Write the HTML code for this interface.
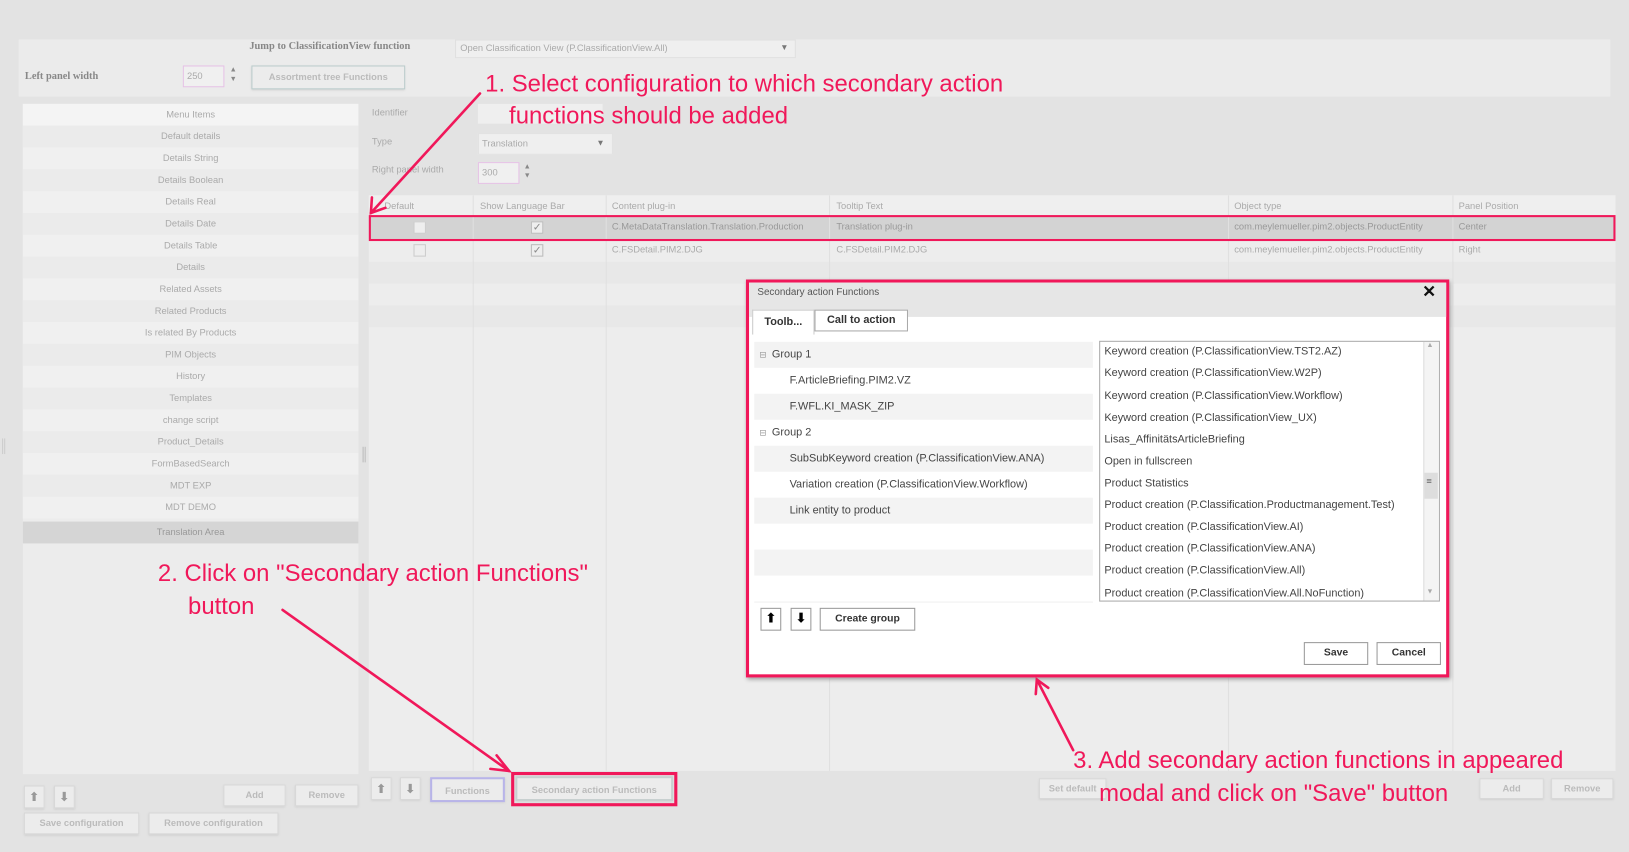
<!DOCTYPE html>
<html><head><meta charset="utf-8"><style>
html,body{margin:0;padding:0;width:1629px;height:852px;overflow:hidden;background:#e3e3e3}
#w{position:absolute;left:0;top:0;width:1568px;height:820px;transform:scale(1.03890,1.03902);transform-origin:0 0;font-family:"Liberation Sans",sans-serif;}
.a{position:absolute;box-sizing:border-box}
.t{position:absolute;font-size:9px;color:#aaa;white-space:nowrap}
.btn{position:absolute;box-sizing:border-box;border:1px solid #d8d8d8;background:#ececec;color:#bbb;font-size:9px;text-align:center;font-weight:bold;box-shadow:0 1px 2px #ccc}
.row{position:absolute;left:0;right:0;height:21px;font-size:9px;color:#aaa;text-align:center;line-height:21px}
.ann{position:absolute;color:#f0185a;font-family:"Liberation Sans Narrow","Liberation Sans",sans-serif;font-size:23px;white-space:nowrap}
.m{position:absolute;font-size:10.5px;color:#444;white-space:nowrap}
.mb{position:absolute;box-sizing:border-box;border:1px solid #999;background:#fff;font-size:10px;font-weight:bold;color:#333;text-align:center}
.ar{font-family:"DejaVu Sans",sans-serif}
</style></head><body><div id="w">
<div class="a" style="left:18px;top:38px;width:1532px;height:55px;background:#ebebeb"></div>
<div class="t" style="left:240px;top:39px;font-family:'Liberation Serif',serif;font-weight:bold;font-size:10px;color:#888">Jump to ClassificationView function</div>
<div class="a" style="left:438px;top:38px;width:328px;height:18px;background:#efefef;border:1px solid #e0e0e0"></div>
<div class="t" style="left:443px;top:41px">Open Classification View (P.ClassificationView.All)</div>
<div class="t" style="left:751px;top:41px;color:#777;font-size:8px">▼</div>
<div class="t" style="left:24px;top:68px;font-family:'Liberation Serif',serif;font-weight:bold;font-size:10px;color:#888">Left panel width</div>
<div class="a" style="left:176px;top:63px;width:40px;height:21px;border:1px solid #e6c2e6;background:#f0f0f0"></div>
<div class="t" style="left:180px;top:68px">250</div>
<div class="t" style="left:221px;top:63px;font-size:7px;color:#888;line-height:9px">▲<br>▼</div>
<div class="btn" style="left:242px;top:63px;width:148px;height:23px;line-height:21px;border-color:#bcc">Assortment tree Functions</div>
<div class="a" style="left:22px;top:100px;width:323px;height:645px;background:#ececec">
<div class="row" style="top:0;background:#f4f4f4">Menu Items</div>
<div class="row" style="top:21px;background:#ebebeb">Default details</div>
<div class="row" style="top:42px;background:#f0f0f0">Details String</div>
<div class="row" style="top:63px;background:#ebebeb">Details Boolean</div>
<div class="row" style="top:84px;background:#f0f0f0">Details Real</div>
<div class="row" style="top:105px;background:#ebebeb">Details Date</div>
<div class="row" style="top:126px;background:#f0f0f0">Details Table</div>
<div class="row" style="top:147px;background:#ebebeb">Details</div>
<div class="row" style="top:168px;background:#f0f0f0">Related Assets</div>
<div class="row" style="top:189px;background:#ebebeb">Related Products</div>
<div class="row" style="top:210px;background:#f0f0f0">Is related By Products</div>
<div class="row" style="top:231px;background:#ebebeb">PIM Objects</div>
<div class="row" style="top:252px;background:#f0f0f0">History</div>
<div class="row" style="top:273px;background:#ebebeb">Templates</div>
<div class="row" style="top:294px;background:#f0f0f0">change script</div>
<div class="row" style="top:315px;background:#ebebeb">Product_Details</div>
<div class="row" style="top:336px;background:#f0f0f0">FormBasedSearch</div>
<div class="row" style="top:357px;background:#ebebeb">MDT EXP</div>
<div class="row" style="top:378px;background:#f0f0f0">MDT DEMO</div>
<div class="row" style="top:402px;background:#d5d5d5;color:#999">Translation Area</div>
</div>
<div class="a" style="left:349px;top:430px;width:3px;height:15px;border-left:1px solid #bbb;border-right:1px solid #bbb"></div>
<div class="a" style="left:2px;top:422px;width:3px;height:15px;border-left:1px solid #ccc;border-right:1px solid #ccc"></div>
<div class="t" style="left:358px;top:103px">Identifier</div>
<div class="a" style="left:460px;top:100px;width:120px;height:19px;background:#efefef"></div>
<div class="t" style="left:358px;top:131px">Type</div>
<div class="a" style="left:460px;top:128px;width:130px;height:21px;background:#efefef;border:1px solid #e2e2e2"></div>
<div class="t" style="left:464px;top:133px">Translation</div>
<div class="t" style="left:574px;top:133px;color:#777;font-size:8px">▼</div>
<div class="t" style="left:358px;top:158px">Right panel width</div>
<div class="a" style="left:460px;top:156px;width:40px;height:21px;border:1px solid #e6c2e6;background:#f0f0f0"></div>
<div class="t" style="left:464px;top:161px">300</div>
<div class="t" style="left:504px;top:156px;font-size:7px;color:#888;line-height:9px">▲<br>▼</div>
<div class="a" style="left:355px;top:188px;width:1200px;height:554px;background:#ededed"></div>
<div class="a" style="left:355px;top:188px;width:1200px;height:19px;background:#efefef"></div>
<div class="a" style="left:355px;top:208px;width:1200px;height:22px;background:#d3d3d3"></div>
<div class="a" style="left:355px;top:252px;width:1200px;height:21px;background:#e8e8e8"></div>
<div class="a" style="left:355px;top:294px;width:1200px;height:21px;background:#e8e8e8"></div>
<div class="a" style="left:455px;top:188px;width:1px;height:554px;background:#e0e0e0"></div>
<div class="a" style="left:583px;top:188px;width:1px;height:554px;background:#e0e0e0"></div>
<div class="a" style="left:798px;top:188px;width:1px;height:554px;background:#e0e0e0"></div>
<div class="a" style="left:1182px;top:188px;width:1px;height:554px;background:#e0e0e0"></div>
<div class="a" style="left:1398px;top:188px;width:1px;height:554px;background:#e0e0e0"></div>
<div class="t" style="left:370px;top:193px">Default</div>
<div class="t" style="left:462px;top:193px">Show Language Bar</div>
<div class="t" style="left:589px;top:193px">Content plug-in</div>
<div class="t" style="left:805px;top:193px">Tooltip Text</div>
<div class="t" style="left:1188px;top:193px">Object type</div>
<div class="t" style="left:1404px;top:193px">Panel Position</div>
<div class="a" style="left:398px;top:213px;width:12px;height:12px;border:1px solid #ccc;background:#eee"></div>
<div class="a" style="left:511px;top:213px;width:12px;height:12px;border:1px solid #bbb;background:#eee;font-size:10px;color:#888;line-height:11px;text-align:center">✓</div>
<div class="t" style="left:589px;top:213px;color:#999">C.MetaDataTranslation.Translation.Production</div>
<div class="t" style="left:805px;top:213px;color:#999">Translation plug-in</div>
<div class="t" style="left:1188px;top:213px;color:#999">com.meylemueller.pim2.objects.ProductEntity</div>
<div class="t" style="left:1404px;top:213px;color:#999">Center</div>
<div class="a" style="left:398px;top:235px;width:12px;height:12px;border:1px solid #ccc;background:#eee"></div>
<div class="a" style="left:511px;top:235px;width:12px;height:12px;border:1px solid #bbb;background:#eee;font-size:10px;color:#888;line-height:11px;text-align:center">✓</div>
<div class="t" style="left:589px;top:235px">C.FSDetail.PIM2.DJG</div>
<div class="t" style="left:805px;top:235px">C.FSDetail.PIM2.DJG</div>
<div class="t" style="left:1188px;top:235px">com.meylemueller.pim2.objects.ProductEntity</div>
<div class="t" style="left:1404px;top:235px">Right</div>
<div class="a" style="left:355px;top:207px;width:1200px;height:25px;border:2px solid #f0185a"></div>
<div class="btn ar" style="left:357px;top:748px;width:20px;height:22px;color:#999;font-size:12px;line-height:20px">⬆</div>
<div class="btn ar" style="left:385px;top:748px;width:20px;height:22px;color:#999;font-size:12px;line-height:20px">⬇</div>
<div class="btn" style="left:414px;top:748px;width:72px;height:24px;line-height:22px;border:2px solid #b8b4e8">Functions</div>
<div class="btn" style="left:496px;top:747px;width:152px;height:24px;line-height:22px;border:2px solid #c8d0d0">Secondary action Functions</div>
<div class="a" style="left:492px;top:743px;width:160px;height:33px;border:3px solid #f0185a"></div>
<div class="btn" style="left:1000px;top:749px;width:65px;height:20px;line-height:18px">Set default</div>
<div class="btn" style="left:1424px;top:749px;width:62px;height:20px;line-height:18px">Add</div>
<div class="btn" style="left:1493px;top:749px;width:60px;height:20px;line-height:18px">Remove</div>
<div class="btn ar" style="left:23px;top:756px;width:20px;height:22px;color:#999;font-size:12px;line-height:20px">⬆</div>
<div class="btn ar" style="left:52px;top:756px;width:20px;height:22px;color:#999;font-size:12px;line-height:20px">⬇</div>
<div class="btn" style="left:215px;top:755px;width:60px;height:21px;line-height:19px">Add</div>
<div class="btn" style="left:284px;top:755px;width:61px;height:21px;line-height:19px">Remove</div>
<div class="btn" style="left:23px;top:782px;width:111px;height:21px;line-height:19px">Save configuration</div>
<div class="btn" style="left:143px;top:782px;width:125px;height:21px;line-height:19px">Remove configuration</div>
<div class="a" style="left:718px;top:269px;width:677px;height:383px;background:#fff;border:3px solid #f0185a;box-shadow:1px 2px 4px #999">
<div class="a" style="left:0;top:0;width:671px;height:33px;background:#e6e6e6"></div>
<div class="m" style="left:8px;top:4px;font-size:9.5px;color:#555">Secondary action Functions</div>
<div class="m" style="left:648px;top:-1px;font-size:16px;font-weight:bold;color:#111">✕</div>
<div class="a" style="left:3px;top:26px;width:60px;height:24px;background:#fff;border:1px solid #ccc;border-bottom:none;font-size:10.5px;font-weight:bold;color:#333;text-align:center;line-height:22px">Toolb...</div>
<div class="a" style="left:63px;top:26px;width:90px;height:21px;background:#fff;border:1px solid #aaa;font-size:10.5px;font-weight:bold;color:#333;text-align:center;line-height:19px">Call to action</div>
<div class="a" style="left:5px;top:57px;width:326px;height:25px;background:#f3f3f3"></div>
<div class="a" style="left:5px;top:107px;width:326px;height:25px;background:#f3f3f3"></div>
<div class="a" style="left:5px;top:157px;width:326px;height:25px;background:#f3f3f3"></div>
<div class="a" style="left:5px;top:207px;width:326px;height:25px;background:#f3f3f3"></div>
<div class="a" style="left:5px;top:257px;width:326px;height:25px;background:#f3f3f3"></div>
<div class="a" style="left:5px;top:307px;width:326px;height:1px;background:#f0f0f0"></div>
<div class="m" style="left:10px;top:65px;font-size:8px;color:#999">⊟</div><div class="m" style="left:22px;top:63px">Group 1</div>
<div class="m" style="left:39px;top:88px">F.ArticleBriefing.PIM2.VZ</div>
<div class="m" style="left:39px;top:113px">F.WFL.KI_MASK_ZIP</div>
<div class="m" style="left:10px;top:140px;font-size:8px;color:#999">⊟</div><div class="m" style="left:22px;top:138px">Group 2</div>
<div class="m" style="left:39px;top:163px">SubSubKeyword creation (P.ClassificationView.ANA)</div>
<div class="m" style="left:39px;top:188px">Variation creation (P.ClassificationView.Workflow)</div>
<div class="m" style="left:39px;top:213px">Link entity to product</div>
<div class="a" style="left:337px;top:56px;width:328px;height:251px;border:1px solid #aaa;overflow:hidden">
<div class="m" style="left:4px;top:3px">Keyword creation (P.ClassificationView.TST2.AZ)</div>
<div class="m" style="left:4px;top:24px">Keyword creation (P.ClassificationView.W2P)</div>
<div class="m" style="left:4px;top:46px">Keyword creation (P.ClassificationView.Workflow)</div>
<div class="m" style="left:4px;top:67px">Keyword creation (P.ClassificationView_UX)</div>
<div class="m" style="left:4px;top:88px">Lisas_AffinitätsArticleBriefing</div>
<div class="m" style="left:4px;top:109px">Open in fullscreen</div>
<div class="m" style="left:4px;top:130px">Product Statistics</div>
<div class="m" style="left:4px;top:151px">Product creation (P.Classification.Productmanagement.Test)</div>
<div class="m" style="left:4px;top:172px">Product creation (P.ClassificationView.AI)</div>
<div class="m" style="left:4px;top:193px">Product creation (P.ClassificationView.ANA)</div>
<div class="m" style="left:4px;top:214px">Product creation (P.ClassificationView.All)</div>
<div class="m" style="left:4px;top:236px">Product creation (P.ClassificationView.All.NoFunction)</div>
<div class="a" style="left:311px;top:0;width:15px;height:249px;background:#f4f4f4;border-left:1px solid #ddd"></div>
<div class="m" style="left:314px;top:0px;font-size:7px;color:#aaa">▲</div>
<div class="m" style="left:314px;top:237px;font-size:7px;color:#aaa">▼</div>
<div class="a" style="left:312px;top:126px;width:13px;height:25px;background:#ddd"></div>
<div class="m" style="left:314px;top:129px;font-size:9px;color:#666">≡</div>
</div>
<div class="mb ar" style="left:11px;top:313px;width:20px;height:22px;line-height:20px;font-size:13px;color:#000">⬆</div>
<div class="mb ar" style="left:40px;top:313px;width:20px;height:22px;line-height:20px;font-size:13px;color:#000">⬇</div>
<div class="mb" style="left:68px;top:313px;width:92px;height:22px;line-height:20px">Create group</div>
<div class="mb" style="left:534px;top:346px;width:62px;height:22px;line-height:20px">Save</div>
<div class="mb" style="left:604px;top:346px;width:62px;height:22px;line-height:20px">Cancel</div>
</div>
<div class="ann" style="left:467px;top:67px">1. Select configuration to which secondary action</div>
<div class="ann" style="left:490px;top:98px">functions should be added</div>
<div class="ann" style="left:152px;top:538px">2. Click on "Secondary action Functions"</div>
<div class="ann" style="left:181px;top:570px">button</div>
<div class="ann" style="left:1033px;top:718px">3. Add secondary action functions in appeared</div>
<div class="ann" style="left:1058px;top:750px">modal and click on "Save" button</div>
<svg class="a" style="left:0;top:0" width="1568" height="820">
<g stroke="#f0185a" stroke-width="2.5" fill="none" stroke-linecap="round">
<line x1="462" y1="90" x2="357" y2="205"/><polyline points="358,190 357,205 371,200"/>
<line x1="272" y1="587" x2="490" y2="742"/><polyline points="478,727 490,742 472,740"/>
<line x1="1033" y1="722" x2="998" y2="654"/><polyline points="997,668 998,654 1009,662"/>
</g></svg>
</div></body></html>
